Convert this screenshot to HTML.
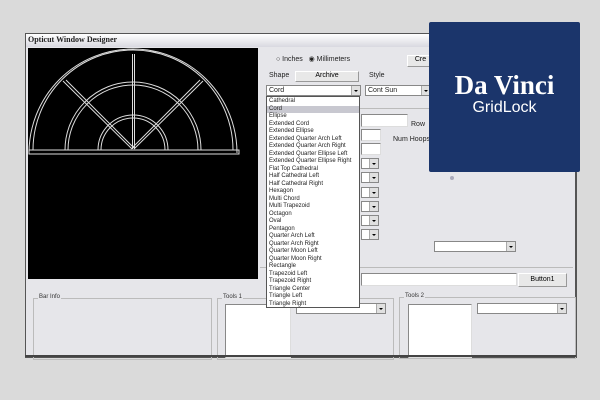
<!DOCTYPE html>
<html><head><style>
body{margin:0;width:600px;height:400px;background:#dadada;position:relative;overflow:hidden;font-family:"Liberation Sans",sans-serif;}
.a{position:absolute;}
.win{left:25px;top:33px;width:549px;height:322px;background:#e6e6ea;border:1px solid #555;border-width:1px 2px 2px 1px;}
.t{font-size:7px;color:#222;}
.box{position:absolute;background:#fff;border:1px solid #888;border-right-color:#ddd;border-bottom-color:#ddd;}
.cb{position:absolute;background:#fff;border:1px solid #888;height:9px;}
.cb:after{content:"";position:absolute;right:0;top:0;width:8px;height:9px;background:#e0e0e0;border-left:1px solid #aaa;}
.cb:before{content:"";position:absolute;right:2px;top:4px;border:2px solid transparent;border-top:2px solid #000;z-index:1;}
.grp{position:absolute;border:1px solid #bbb;}
.grp span{position:absolute;top:-5px;left:4px;background:#e6e6ea;font-size:6px;padding:0 1px;color:#333;}
.btn{position:absolute;background:#e8e8e8;border:1px solid #999;border-top-color:#fff;border-left-color:#fff;font-size:7px;text-align:center;}
.list{left:266px;top:96px;width:94px;height:212px;background:#fff;border:1px solid #555;font-size:6px;line-height:7.5px;color:#222;overflow:hidden;padding-top:1px;box-sizing:border-box;}
.list div{padding-left:2px;height:7.5px;white-space:nowrap;}
</style></head><body>
<div class="a win"></div>
<div class="a" style="left:26px;top:34px;width:548px;height:13px;background:linear-gradient(#fff,#d8d8e0);"></div>
<div class="a" style="left:28px;top:35px;font-size:8px;font-weight:bold;font-family:'Liberation Serif',serif;color:#222">Opticut Window Designer</div>
<div class="a" style="left:28px;top:48px;width:230px;height:231px;background:#000"></div>
<svg class="a" style="left:0;top:0" width="260" height="280">
<g fill="none" stroke="#ddd" stroke-width="1">
<path d="M29 153 A104 104 0 0 1 237 153"/>
<path d="M33 150 A100 100 0 0 1 233 150"/>
<path d="M65 150 A68 68 0 0 1 201 150"/>
<path d="M68 150 A65 65 0 0 1 198 150"/>
<path d="M98 150 A35 35 0 0 1 168 150"/>
<path d="M101 150 A32 32 0 0 1 165 150"/>
<rect x="29" y="150" width="210" height="4"/>
<path d="M132.5 54 V149 M134.5 54 V149"/>
<path d="M63 81 L132 149 M66 80 L134 148"/>
<path d="M203 81 L134 149 M200 80 L132 148"/>
</g></svg>
<div class="a t" style="left:276px;top:55px;">○ Inches&nbsp;&nbsp;&nbsp;◉ Millimeters</div>
<div class="btn" style="left:407px;top:55px;width:25px;height:10px;">Cre</div>
<div class="a t" style="left:269px;top:72px;">Shape</div>
<div class="btn" style="left:295px;top:71px;width:62px;height:9px;">Archive</div>
<div class="a t" style="left:369px;top:72px;">Style</div>
<div class="cb" style="left:266px;top:85px;width:93px;"><span class="t" style="position:absolute;left:2px;top:1px">Cord</span></div>
<div class="cb" style="left:365px;top:85px;width:64px;"><span class="t" style="position:absolute;left:2px;top:1px">Cont Sun</span></div>
<div class="a" style="left:330px;top:108px;width:100px;height:1px;background:#bbb"></div>
<div class="box" style="left:361px;top:114px;width:45px;height:11px"></div>
<div class="box" style="left:361px;top:129px;width:18px;height:10px"></div>
<div class="box" style="left:361px;top:143px;width:18px;height:10px"></div>
<div class="a t" style="left:411px;top:121px;">Row</div>
<div class="a t" style="left:393px;top:136px;">Num Hoops</div>
<div class="cb" style="left:361px;top:158px;width:16px;"></div>
<div class="cb" style="left:361px;top:172px;width:16px;"></div>
<div class="cb" style="left:361px;top:187px;width:16px;"></div>
<div class="cb" style="left:361px;top:201px;width:16px;"></div>
<div class="cb" style="left:361px;top:215px;width:16px;"></div>
<div class="cb" style="left:361px;top:229px;width:16px;"></div>
<div class="cb" style="left:434px;top:241px;width:80px;"></div>
<div class="a" style="left:450px;top:176px;width:4px;height:4px;border-radius:2px;background:#aab"></div>
<div class="a" style="left:260px;top:267px;width:313px;height:1px;background:#bbb"></div>
<div class="box" style="left:361px;top:273px;width:154px;height:11px"></div>
<div class="btn" style="left:518px;top:273px;width:47px;height:12px;line-height:12px">Button1</div>
<div class="grp" style="left:33px;top:298px;width:177px;height:60px"><span>Bar Info</span></div>
<div class="grp" style="left:217px;top:298px;width:175px;height:60px"><span>Tools 1</span></div>
<div class="grp" style="left:399px;top:297px;width:175px;height:60px"><span>Tools 2</span></div>
<div class="box" style="left:225px;top:304px;width:64px;height:52px"></div>
<div class="cb" style="left:296px;top:303px;width:88px;"></div>
<div class="box" style="left:408px;top:304px;width:62px;height:52px"></div>
<div class="cb" style="left:477px;top:303px;width:88px;"></div>
<div class="a" style="left:25px;top:355px;width:551px;height:2px;background:#444"></div>
<div class="a list">
<div>Cathedral</div><div style="background:#c8c8d0">Cord</div><div>Ellipse</div><div>Extended Cord</div><div>Extended Ellipse</div><div>Extended Quarter Arch Left</div><div>Extended Quarter Arch Right</div><div>Extended Quarter Ellipse Left</div><div>Extended Quarter Ellipse Right</div><div>Flat Top Cathedral</div><div>Half Cathedral Left</div><div>Half Cathedral Right</div><div>Hexagon</div><div>Multi Chord</div><div>Multi Trapezoid</div><div>Octagon</div><div>Oval</div><div>Pentagon</div><div>Quarter Arch Left</div><div>Quarter Arch Right</div><div>Quarter Moon Left</div><div>Quarter Moon Right</div><div>Rectangle</div><div>Trapezoid Left</div><div>Trapezoid Right</div><div>Triangle Center</div><div>Triangle Left</div><div>Triangle Right</div>
</div>
<div class="a" style="left:429px;top:22px;width:151px;height:150px;background:#1b356b;border-radius:2px;text-align:center;color:#fff">
<div style="margin-top:49px;font-family:'Liberation Serif',serif;font-weight:bold;font-size:27px;line-height:28px">Da Vinci</div>
<div style="font-size:16px;line-height:18px">GridLock</div>
</div>
</body></html>
